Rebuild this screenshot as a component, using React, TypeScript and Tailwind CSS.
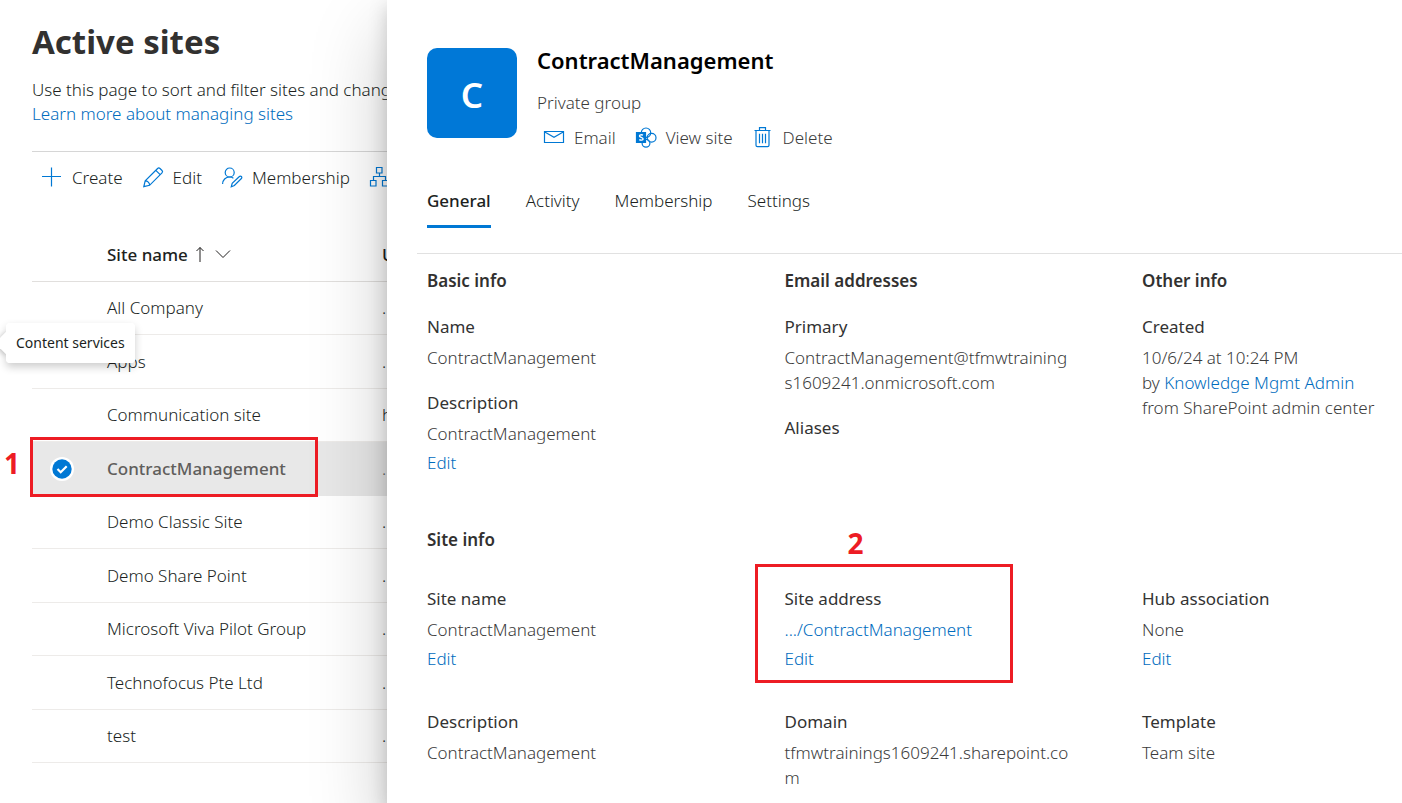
import type { ReactNode } from "react";

const sites = [
  { name: "All Company", url: "..." },
  { name: "Apps", url: "..." },
  { name: "Communication site", url: "https" },
  { name: "ContractManagement", url: "...", selected: true },
  { name: "Demo Classic Site", url: "..." },
  { name: "Demo Share Point", url: "..." },
  { name: "Microsoft Viva Pilot Group", url: "..." },
  { name: "Technofocus Pte Ltd", url: "..." },
  { name: "test", url: "..." },
];

const tabs = ["General", "Activity", "Membership", "Settings"];

function Icon({ children }: { children: ReactNode }) {
  return (
    <svg
      viewBox="0 0 20 20"
      className="size-5 shrink-0 overflow-visible text-[#0078d4]"
      fill="none"
      stroke="currentColor"
      strokeWidth="1.2"
      aria-hidden="true"
    >
      {children}
    </svg>
  );
}

const PlusIcon = () => (
  <Icon>
    <path d="M9.500-.5v19M0 8.500h19" />
  </Icon>
);

const PencilIcon = () => (
  <Icon>
    <path d="M.8 18.700 2.200 12.900 14.600.5a1.700 1.700 0 0 1 2.400 0l2 2a1.700 1.700 0 0 1 0 2.400L6.600 17.300ZM2.200 12.900c2.400 0 4.400 2 4.400 4.400M12.800 2.300l4.400 4.400" />
  </Icon>
);

const MembershipIcon = () => (
  <Icon>
    <circle cx="7.700" cy="4.500" r="4.500" />
    <path d="M.6 16c0-4 3-7 7-7 1.500 0 2.700.4 3.800 1.200M9.300 18.700l.9-3.400 7.200-6.800a1.400 1.400 0 0 1 2 0 1.400 1.400 0 0 1 0 2l-7 7Z" />
  </Icon>
);

const HubIcon = () => (
  <Icon>
    <path d="M6.500-.5h5.500V5H6.500ZM.5 12.500h5.500V18H.5ZM12.500 12.500H18V18h-5.500ZM9.500 5v3.500M3.500 12.500v-4h12v4" />
  </Icon>
);

const MailIcon = () => (
  <Icon>
    <path d="M.5 3.500h19v11H.5ZM.8 3.900 10 9.200l9.200-5.300" />
  </Icon>
);

const SharePointIcon = () => (
  <Icon>
    <circle cx="10" cy="4.700" r="4.700" />
    <circle cx="15.600" cy="9.800" r="4.400" />
    <circle cx="10" cy="15.200" r="3.900" />
    <path d="M.5 4.500h9v10h-9Z" fill="currentColor" />
    <path
      d="M7 7.200c-1.400-.7-3.500-.5-3.500.8 0 1.700 3.600 1 3.600 2.900 0 1.400-2.300 1.500-3.800.7"
      stroke="white"
      strokeWidth="1.400"
    />
  </Icon>
);

const TrashIcon = () => (
  <Icon>
    <path d="M1.500 2.500H17.500M6.500 2.500V-.3h6V2.500M3 2.500v14.800c0 .9.500 1.400 1.400 1.400h10.200c.9 0 1.400-.5 1.400-1.400V2.500M6.500 5.700v9.600M9.500 5.700v9.600M12.500 5.700v9.600" />
  </Icon>
);

function Command({ icon, children }: { icon: ReactNode; children: ReactNode }) {
  return (
    <button type="button" className="flex shrink-0 items-center gap-[10px] whitespace-nowrap">
      {icon}
      {children}
    </button>
  );
}

function Link({ children }: { children: ReactNode }) {
  return (
    <a href="#" className="text-[#006cbe]">
      {children}
    </a>
  );
}

function Field({ label, children }: { label: string; children?: ReactNode }) {
  return (
    <div>
      <h3 className="font-normal text-[#333]">{label}</h3>
      {children && <div className="mt-1.5 leading-[25px] break-all">{children}</div>}
    </div>
  );
}

function EditLink() {
  return (
    <div className="mt-1">
      <Link>Edit</Link>
    </div>
  );
}

function SitesTable() {
  return (
    <table className="mt-6 w-full table-fixed border-separate border-spacing-0 text-left text-[#201f1e]">
      <colgroup>
        <col className="w-[75px]" />
        <col className="w-[275px]" />
        <col />
      </colgroup>
      <thead>
        <tr className="h-[54px] [&>th]:border-b [&>th]:border-[#e1dfdd]">
          <th aria-label="Selected" />
          <th className="font-medium">
            <button type="button" className="flex items-center">
              Site name
              <svg viewBox="0 0 40 20" className="ml-1.5 h-5 w-10" fill="none" stroke="currentColor" aria-hidden="true">
                <path d="M6 17V2.500M2.500 6 6 2.500 9.500 6M22 5.500l7 7 7-7" />
              </svg>
            </button>
          </th>
          <th className="overflow-hidden font-medium">URL</th>
        </tr>
      </thead>
      <tbody>
        {sites.map((site) =>
          site.selected ? (
            <tr key={site.name} className="h-[54px] bg-[#e8e8e8] text-[#605e5c]">
              <td className="relative">
                <span className="ml-[18px] flex size-6 items-center justify-center rounded-full bg-white">
                  <svg viewBox="0 0 20 20" className="size-5" role="img" aria-label="Selected">
                    <circle cx="10" cy="10" r="9.700" fill="#0078d4" />
                    <path d="m5.500 10 3.200 3.200 6-6" fill="none" stroke="white" strokeWidth="2.200" />
                  </svg>
                </span>
                <span className="pointer-events-none absolute -top-[5px] -left-0.5 h-[60px] w-[288px] border-3 border-[#ed1c24]" />
                <span className="absolute -top-1 -left-7 text-[28px] leading-[50px] font-bold text-[#ed1c24]">1</span>
              </td>
              <td className="font-medium">{site.name}</td>
              <td className="overflow-hidden">{site.url}</td>
            </tr>
          ) : (
            <tr key={site.name} className="odd:h-[53px] even:h-[54px] [&>td]:border-b [&>td]:border-[#edebe9]">
              <td />
              <td>{site.name}</td>
              <td className="overflow-hidden">{site.url}</td>
            </tr>
          ),
        )}
      </tbody>
    </table>
  );
}

function SitesPage() {
  return (
    <main className="overflow-hidden pt-px pl-8 whitespace-nowrap">
      <h1 className="mt-[18px] text-[33px] leading-[46px] font-bold text-[#323130]">Active sites</h1>
      <p className="mt-[13px]">
        Use this page to sort and filter sites and change
        <br />
        <Link>Learn more about managing sites</Link>
      </p>
      <div className="mt-[25px] flex h-[53px] items-center gap-5 border-t border-[#d6d6d6] pl-[10px]">
        <Command icon={<PlusIcon />}>Create</Command>
        <Command icon={<PencilIcon />}>Edit</Command>
        <Command icon={<MembershipIcon />}>Membership</Command>
        <Command icon={<HubIcon />}>{null}</Command>
      </div>
      <SitesTable />
    </main>
  );
}

function PanelHeader() {
  return (
    <header className="flex gap-5 px-10 pt-12">
      <div className="flex size-[90px] shrink-0 items-center justify-center rounded-[10px] bg-[#0078d7] pt-1 text-[35px] font-semibold text-white">
        C
      </div>
      <div>
        <h2 className="text-[22px] leading-6 font-semibold text-black">ContractManagement</h2>
        <p className="mt-[19px]">Private group</p>
        <div className="mt-[11px] flex gap-5 pl-[7px]">
          <Command icon={<MailIcon />}>Email</Command>
          <Command icon={<SharePointIcon />}>View site</Command>
          <Command icon={<TrashIcon />}>Delete</Command>
        </div>
      </div>
    </header>
  );
}

function SitePanel() {
  return (
    <section className="relative bg-white text-[#3b3b3b] shadow-[0_32px_72px_rgba(0,0,0,0.22),0_6px_18px_rgba(0,0,0,0.18)]">
      <PanelHeader />
      <div role="tablist" className="mt-[39px] flex gap-[35px] px-10 text-[#201f1e]">
        {tabs.map((tab, i) => (
          <button
            key={tab}
            type="button"
            role="tab"
            aria-selected={i === 0}
            className="h-[39px] border-b-3 border-transparent pb-3 aria-selected:border-[#0078d4] aria-selected:font-medium"
          >
            {tab}
          </button>
        ))}
      </div>
      <div className="mt-[25px] ml-[30px] border-t border-[#e1e1e1]" />
      <div className="grid grid-cols-[11fr_11fr_8fr] pt-[15px] pl-10">
        <div className="pr-[70px]">
          <h2 className="font-semibold text-[#323130]">Basic info</h2>
          <div className="mt-[22px] flex flex-col gap-[21px]">
            <Field label="Name">ContractManagement</Field>
            <Field label="Description">
              ContractManagement
              <EditLink />
            </Field>
          </div>
        </div>
        <div className="pr-[70px]">
          <h2 className="font-semibold text-[#323130]">Email addresses</h2>
          <div className="mt-[22px] flex flex-col gap-[21px]">
            <Field label="Primary">ContractManagement@tfmwtrainings1609241.onmicrosoft.com</Field>
            <Field label="Aliases" />
          </div>
        </div>
        <div className="whitespace-nowrap">
          <h2 className="font-semibold text-[#323130]">Other info</h2>
          <div className="mt-[22px]">
            <Field label="Created">
              10/6/24 at 10:24 PM
              <br />
              by <Link>Knowledge Mgmt Admin</Link>
              <br />
              from SharePoint admin center
            </Field>
          </div>
        </div>
      </div>
      <h2 className="mt-[53px] pl-10 font-semibold text-[#323130]">Site info</h2>
      <div className="mt-[35px] grid grid-cols-[11fr_11fr_8fr] gap-y-[39px] pb-4 pl-10">
        <div>
          <Field label="Site name">
            ContractManagement
            <EditLink />
          </Field>
        </div>
        <div className="relative">
          <Field label="Site address">
            <Link>.../ContractManagement</Link>
            <EditLink />
          </Field>
          <span className="pointer-events-none absolute -top-[23px] -left-[30px] h-[119px] w-[258px] border-3 border-[#ed1c24]" />
          <span className="absolute -top-16 left-[63px] text-[28px] leading-10 font-bold text-[#ed1c24]">2</span>
        </div>
        <div>
          <Field label="Hub association">
            None
            <EditLink />
          </Field>
        </div>
        <div>
          <Field label="Description">ContractManagement</Field>
        </div>
        <div className="pr-[70px]">
          <Field label="Domain">tfmwtrainings1609241.sharepoint.com</Field>
        </div>
        <div>
          <Field label="Template">Team site</Field>
        </div>
      </div>
    </section>
  );
}

export default function App() {
  return (
    <div className="relative grid min-h-screen grid-cols-[387px_minmax(0,1fr)] overflow-hidden bg-white font-['Noto_Sans','Open_Sans',sans-serif] text-[17px] leading-6 font-light text-[#201f1e]">
      <SitesPage />
      <SitePanel />
      <div
        role="tooltip"
        className="absolute top-[323px] left-1.5 flex h-10 items-center rounded-sm bg-white px-2.5 text-[14px] font-normal shadow-[0_4px_9px_rgba(0,0,0,0.2)] before:absolute before:top-3 before:-left-2 before:size-4 before:rotate-45 before:bg-white before:shadow-[0_2px_5px_rgba(0,0,0,0.2)] after:absolute after:inset-0 after:rounded-sm after:bg-white"
      >
        <span className="relative z-10">Content services</span>
      </div>
    </div>
  );
}
